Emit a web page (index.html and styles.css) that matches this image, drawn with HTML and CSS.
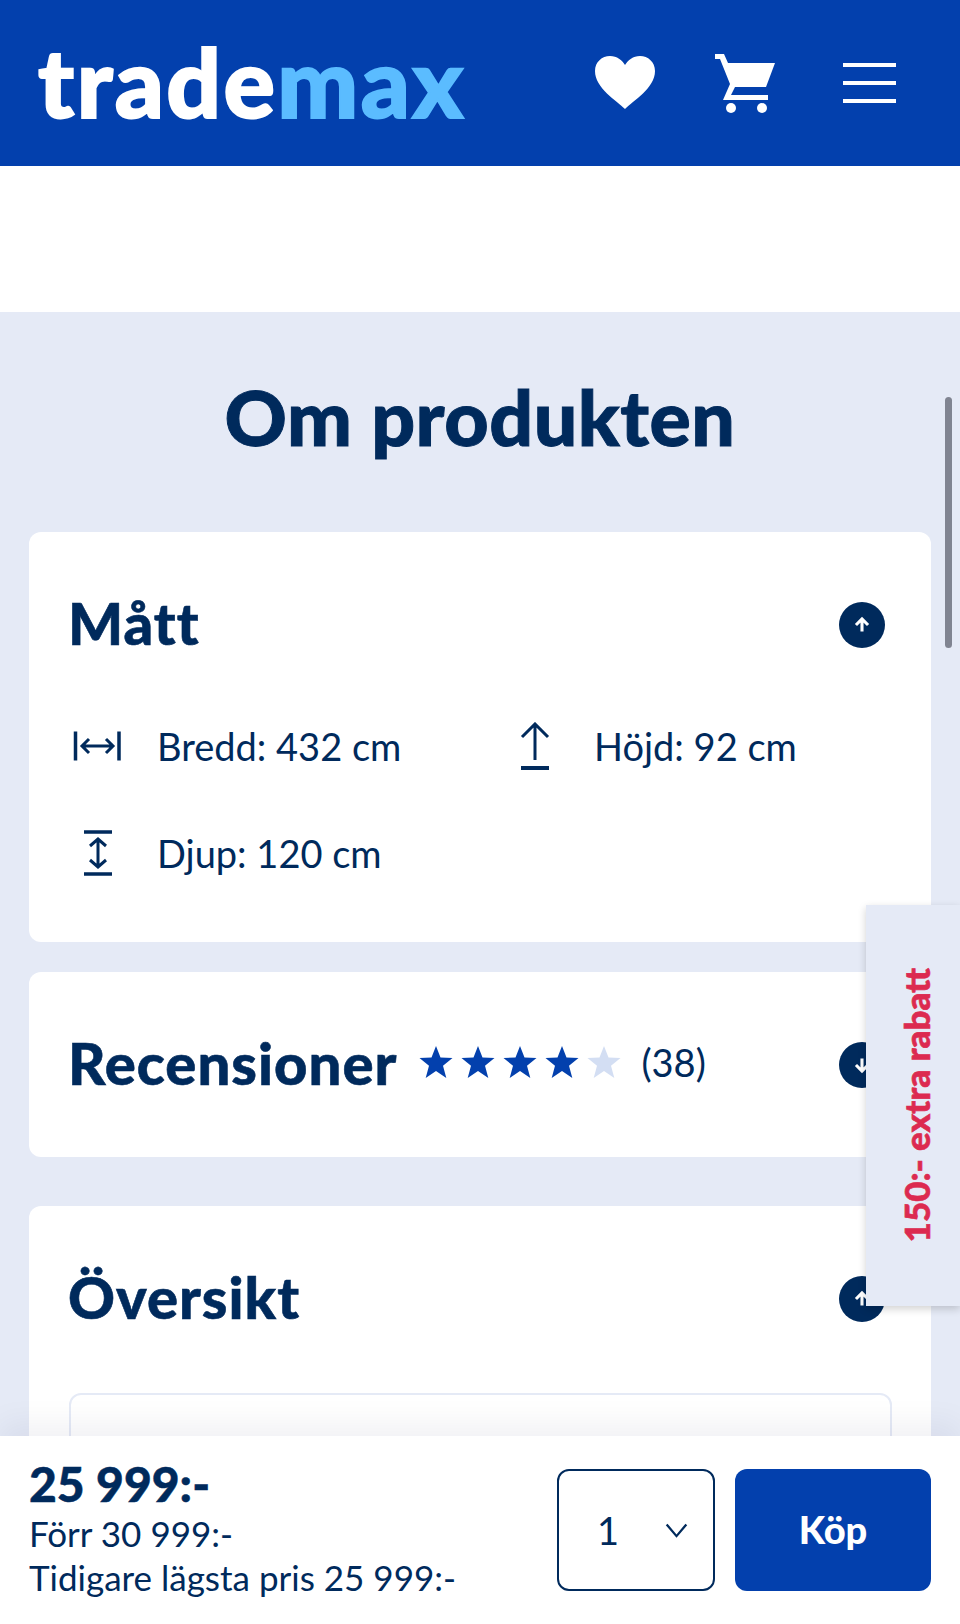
FILE: index.html
```html
<!DOCTYPE html>
<html lang="sv">
<head>
    <meta charset="UTF-8">
    <meta name="viewport" content="width=device-width, initial-scale=1.0">
    <title>Trademax - Om produkten</title>
    <link rel="stylesheet" href="styles.css">
</head>
<body>
    <div class="header">
        <div class="logo">trade<span class="logo-accent">max</span></div>
        <div class="header-icons">
            <svg class="icon-heart" viewBox="0 0 60 54"><path d="M30 53 C22 45 0 32 0 15 C0 6 7 0 15 0 C22 0 27 4 30 9 C33 4 38 0 45 0 C53 0 60 6 60 15 C60 32 38 45 30 53 Z" fill="#fff"/></svg>
            <svg class="icon-cart" viewBox="0 0 60 60"><path d="M0 1 H9 L13 10 H60 L51 34 H20 L16 42 H53 V47 H8 L15 31 L5 6 H0 Z" fill="#fff"/><circle cx="16" cy="55" r="5" fill="#fff"/><circle cx="47" cy="55" r="5" fill="#fff"/></svg>
            <div class="burger"><span></span><span></span><span></span></div>
        </div>
    </div>

    <div class="spacer"></div>

    <div class="content">
        <h1 class="page-title">Om produkten</h1>

        <div class="card card-dim">
            <div class="card-head">
                <h2 class="card-title">Mått</h2>
                <span class="round-btn">
                    <svg viewBox="0 0 20 20"><path d="M10 16 V5 M4.5 10 L10 4.5 L15.5 10" fill="none" stroke="#fff" stroke-width="2.8"/></svg>
                </span>
            </div>
            <div class="dim-grid">
                <div class="dim-row">
                    <svg class="dim-icon" viewBox="0 0 56 48"><path d="M5.5 9.5 V38.5 M49 9.5 V38.5" fill="none" stroke="#002a5c" stroke-width="3.5"/><path d="M12 24 H43 M19 17 L12 24 L19 31 M36 17 L43 24 L36 31" fill="none" stroke="#002a5c" stroke-width="3"/></svg>
                    <span>Bredd: 432 cm</span>
                </div>
                <div class="dim-row">
                    <svg class="dim-icon" viewBox="0 0 56 48"><path d="M28 38 V2 M15 15 L28 2 L41 15" fill="none" stroke="#002a5c" stroke-width="3"/><path d="M14 46 H42" stroke="#002a5c" stroke-width="4"/></svg>
                    <span>Höjd: 92 cm</span>
                </div>
                <div class="dim-row">
                    <svg class="dim-icon" viewBox="0 0 56 48"><path d="M14 3 H42 M14 45 H42" stroke="#002a5c" stroke-width="3.5"/><path d="M28 10 V38 M20 17 L28 10 L36 17 M20 31 L28 38 L36 31" fill="none" stroke="#002a5c" stroke-width="3"/></svg>
                    <span>Djup: 120 cm</span>
                </div>
            </div>
        </div>

        <div class="card card-reviews">
            <div class="card-head">
                <div class="reviews-left">
                    <h2 class="card-title">Recensioner</h2>
                    <div class="stars">
                        <svg viewBox="0 0 34 34"><path class="star-on" d="M17 1 L21.5 12.5 L33.5 13 L24 20.8 L27.3 33 L17 26 L6.7 33 L10 20.8 L.5 13 L12.5 12.5 Z"/></svg>
                        <svg viewBox="0 0 34 34"><path class="star-on" d="M17 1 L21.5 12.5 L33.5 13 L24 20.8 L27.3 33 L17 26 L6.7 33 L10 20.8 L.5 13 L12.5 12.5 Z"/></svg>
                        <svg viewBox="0 0 34 34"><path class="star-on" d="M17 1 L21.5 12.5 L33.5 13 L24 20.8 L27.3 33 L17 26 L6.7 33 L10 20.8 L.5 13 L12.5 12.5 Z"/></svg>
                        <svg viewBox="0 0 34 34"><path class="star-on" d="M17 1 L21.5 12.5 L33.5 13 L24 20.8 L27.3 33 L17 26 L6.7 33 L10 20.8 L.5 13 L12.5 12.5 Z"/></svg>
                        <svg viewBox="0 0 34 34"><path class="star-off" d="M17 1 L21.5 12.5 L33.5 13 L24 20.8 L27.3 33 L17 26 L6.7 33 L10 20.8 L.5 13 L12.5 12.5 Z"/></svg>
                    </div>
                    <span class="review-count">(38)</span>
                </div>
                <span class="round-btn">
                    <svg viewBox="0 0 20 20"><path d="M10 4 V15 M4.5 10 L10 15.5 L15.5 10" fill="none" stroke="#fff" stroke-width="2.8"/></svg>
                </span>
            </div>
        </div>

        <div class="card card-overview">
            <div class="card-head">
                <h2 class="card-title">Översikt</h2>
                <span class="round-btn">
                    <svg viewBox="0 0 20 20"><path d="M10 16 V5 M4.5 10 L10 4.5 L15.5 10" fill="none" stroke="#fff" stroke-width="2.8"/></svg>
                </span>
            </div>
            <div class="inner-box"></div>
        </div>
    </div>

    <div class="scroll-thumb"></div>

    <div class="side-tab"><span>150:- extra rabatt</span></div>

    <div class="buy-bar">
        <div class="prices">
            <div class="price-now">25 999:-</div>
            <div class="price-old">Förr 30 999:-</div>
            <div class="price-old">Tidigare lägsta pris 25 999:-</div>
        </div>
        <div class="buy-actions">
            <div class="qty">
                <span>1</span>
                <svg viewBox="0 0 24 16"><path d="M1.5 1.5 L12 14 L22.5 1.5" fill="none" stroke="#002a5c" stroke-width="2.4"/></svg>
            </div>
            <button class="buy-btn">Köp</button>
        </div>
    </div>
</body>
</html>
```

FILE: styles.css
```css
* {
    margin: 0;
    padding: 0;
    box-sizing: border-box;
}

body {
    position: relative;
    height: 1624px;
    overflow: hidden;
    font-family: Lato, "Open Sans", sans-serif;
    background: #fff;
    color: #002a5c;
}

.header {
    height: 166px;
    background: #0340ad;
    display: flex;
    align-items: center;
    justify-content: space-between;
    padding: 0 64px 0 38px;
}

.logo {
    font-size: 96px;
    font-weight: 900;
    line-height: 1;
    letter-spacing: 2.4px;
    -webkit-text-stroke: 2px currentColor;
    color: #fff;
    margin-top: -4px;
}

.logo-accent {
    color: #5bbcff;
}

.header-icons {
    display: flex;
    align-items: center;
    gap: 60px;
}

.icon-heart {
    width: 60px;
    height: 54px;
}

.icon-cart {
    width: 60px;
    height: 60px;
}

.burger {
    width: 53px;
    display: flex;
    flex-direction: column;
    gap: 14px;
    margin-left: 8px;
}

.burger span {
    height: 4px;
    background: #fff;
}

.spacer {
    height: 146px;
}

.content {
    background: #e5eaf6;
    padding: 0 29px;
    height: 1312px;
}

.page-title {
    height: 220px;
    font-size: 77px;
    font-weight: 900;
    line-height: 208px;
    letter-spacing: 0.5px;
    -webkit-text-stroke: 1px currentColor;
    text-align: center;
}

.card {
    background: #fff;
    border-radius: 12px;
    padding: 0 41px;
}

.card-dim {
    height: 410px;
    margin-bottom: 30px;
}

.card-reviews {
    height: 185px;
    margin-bottom: 49px;
}

.card-overview {
    height: 400px;
}

.card-head {
    display: flex;
    align-items: center;
    justify-content: space-between;
    height: 185px;
}

.card-dim .card-head {
    margin-bottom: 5px;
}

.card-title {
    font-size: 58px;
    font-weight: 900;
    letter-spacing: 1px;
    -webkit-text-stroke: 0.6px currentColor;
    margin-left: -2px;
    margin-bottom: 5px;
}

.round-btn {
    width: 46px;
    height: 46px;
    border-radius: 50%;
    background: #002a5c;
    display: flex;
    align-items: center;
    justify-content: center;
    flex-shrink: 0;
    margin-right: 5px;
}

.round-btn svg {
    width: 22px;
    height: 22px;
}

.dim-grid {
    display: grid;
    grid-template-columns: 437px 1fr;
    row-gap: 59px;
}

.dim-row {
    display: flex;
    align-items: center;
    gap: 31px;
    height: 48px;
    font-size: 38px;
}

.dim-icon {
    width: 56px;
    height: 48px;
    flex-shrink: 0;
}

.reviews-left {
    display: flex;
    align-items: center;
}

.stars {
    display: flex;
    gap: 8px;
    margin-left: 22px;
    margin-bottom: 5px;
}

.stars svg {
    width: 34px;
    height: 34px;
}

.star-on {
    fill: #0340ad;
}

.star-off {
    fill: #d3def3;
}

.review-count {
    font-size: 38px;
    margin-left: 20px;
    margin-bottom: 5px;
}

.inner-box {
    height: 120px;
    border: 2px solid #e5eaf6;
    border-radius: 12px;
    margin-top: 2px;
    margin-left: -1px;
    margin-right: -2px;
}

.scroll-thumb {
    position: absolute;
    top: 397px;
    left: 945px;
    width: 7px;
    height: 251px;
    border-radius: 4px;
    background: #808491;
}

.side-tab {
    position: absolute;
    top: 905px;
    left: 866px;
    width: 94px;
    height: 401px;
    background: #e5eaf6;
    box-shadow: 0 3px 8px rgba(0, 0, 0, 0.18);
    display: flex;
    align-items: center;
    padding-left: 32px;
}

.side-tab span {
    writing-mode: vertical-rl;
    transform: rotate(180deg);
    font-size: 35px;
    font-weight: 900;
    line-height: 36px;
    white-space: nowrap;
    -webkit-text-stroke: 0.6px currentColor;
    color: #dc2a50;
}

.buy-bar {
    position: absolute;
    left: 0;
    right: 0;
    bottom: 0;
    height: 188px;
    background: #fff;
    box-shadow: 0 -12px 30px rgba(0, 20, 60, 0.06);
    display: flex;
    align-items: flex-start;
    justify-content: space-between;
    padding: 21px 29px 0;
}

.price-now {
    font-size: 48px;
    font-weight: 900;
    line-height: 54px;
    -webkit-text-stroke: 0.5px currentColor;
}

.price-old {
    font-size: 35px;
    line-height: 44px;
}

.buy-actions {
    display: flex;
    gap: 20px;
    margin-top: 12px;
}

.qty {
    width: 158px;
    height: 122px;
    border: 2px solid #002a5c;
    border-radius: 12px;
    display: flex;
    align-items: center;
    justify-content: space-between;
    padding: 0 25px 0 38px;
    font-size: 38px;
}

.qty svg {
    width: 23px;
    height: 15px;
}

.buy-btn {
    width: 196px;
    height: 122px;
    border: none;
    border-radius: 12px;
    background: #0340ad;
    color: #fff;
    font-family: inherit;
    font-size: 38px;
    font-weight: 900;
    padding-bottom: 3px;
}
```
